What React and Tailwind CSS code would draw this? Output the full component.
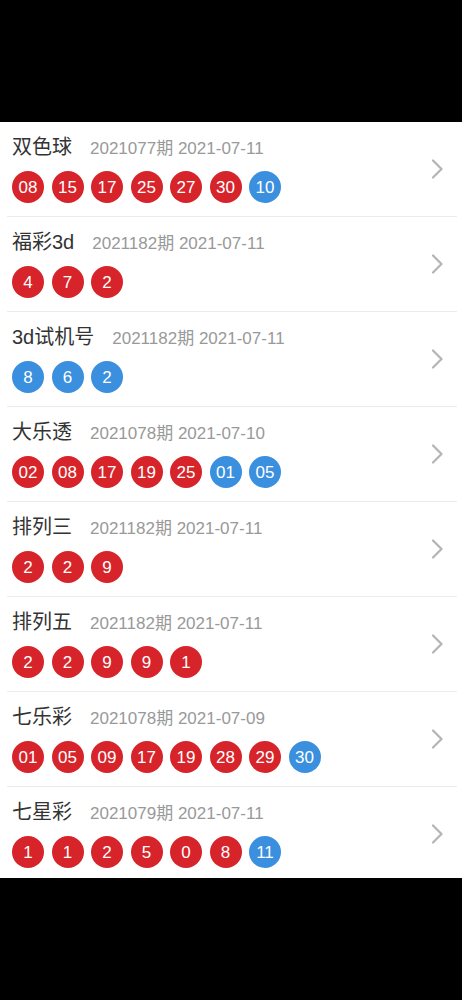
const draws = [
  { name: '双色球', issue: '2021077期 2021-07-11', red: ['08', '15', '17', '25', '27', '30'], blue: ['10'] },
  { name: '福彩3d', issue: '2021182期 2021-07-11', red: ['4', '7', '2'], blue: [] },
  { name: '3d试机号', issue: '2021182期 2021-07-11', red: [], blue: ['8', '6', '2'] },
  { name: '大乐透', issue: '2021078期 2021-07-10', red: ['02', '08', '17', '19', '25'], blue: ['01', '05'] },
  { name: '排列三', issue: '2021182期 2021-07-11', red: ['2', '2', '9'], blue: [] },
  { name: '排列五', issue: '2021182期 2021-07-11', red: ['2', '2', '9', '9', '1'], blue: [] },
  { name: '七乐彩', issue: '2021078期 2021-07-09', red: ['01', '05', '09', '17', '19', '28', '29'], blue: ['30'] },
  { name: '七星彩', issue: '2021079期 2021-07-11', red: ['1', '1', '2', '5', '0', '8'], blue: ['11'] },
]

function Ball({ n, blue }) {
  return (
    <span
      className={`flex h-8 w-8 items-center justify-center rounded-full text-[17px] leading-none text-white ${blue ? 'bg-[#3a8fde]' : 'bg-[#d6242a]'}`}
    >
      {n}
    </span>
  )
}

function Chevron() {
  return (
    <svg width="13" height="20" viewBox="0 0 13 20" fill="none">
      <polyline points="2,1.5 10.5,10 2,18.5" stroke="#b4b4b4" strokeWidth="2.2" strokeLinecap="round" strokeLinejoin="round" />
    </svg>
  )
}

function DrawRow({ item, last }) {
  return (
    <div>
      <div className="flex h-[94px] items-center">
        <div className="flex-1 pl-3 pt-3">
          <div className="flex h-[26px] items-baseline">
            <span className="text-[20px] leading-[27px] text-[#333]">{item.name}</span>
            <span className="ml-[18px] text-[17px] leading-[26px] text-[#999]">{item.issue}</span>
          </div>
          <div className="mt-[11px] mb-[13px] flex gap-[7.5px]">
            {item.red.map((n, i) => (
              <Ball key={'r' + i} n={n} />
            ))}
            {item.blue.map((n, i) => (
              <Ball key={'b' + i} n={n} blue />
            ))}
          </div>
        </div>
        <div className="pr-[18px]">
          <Chevron />
        </div>
      </div>
      {!last && <div className="ml-[7px] mr-[5px] h-px bg-[#ececec]" />}
    </div>
  )
}

export default function App() {
  return (
    <div className="h-[1000px] bg-black font-['Liberation_Sans','Noto_Sans_CJK_SC',sans-serif]">
      <div className="h-[122px]" />
      <div className="h-[756px] overflow-hidden bg-white">
        {draws.map((item, i) => (
          <DrawRow key={item.name} item={item} last={i === draws.length - 1} />
        ))}
      </div>
    </div>
  )
}
